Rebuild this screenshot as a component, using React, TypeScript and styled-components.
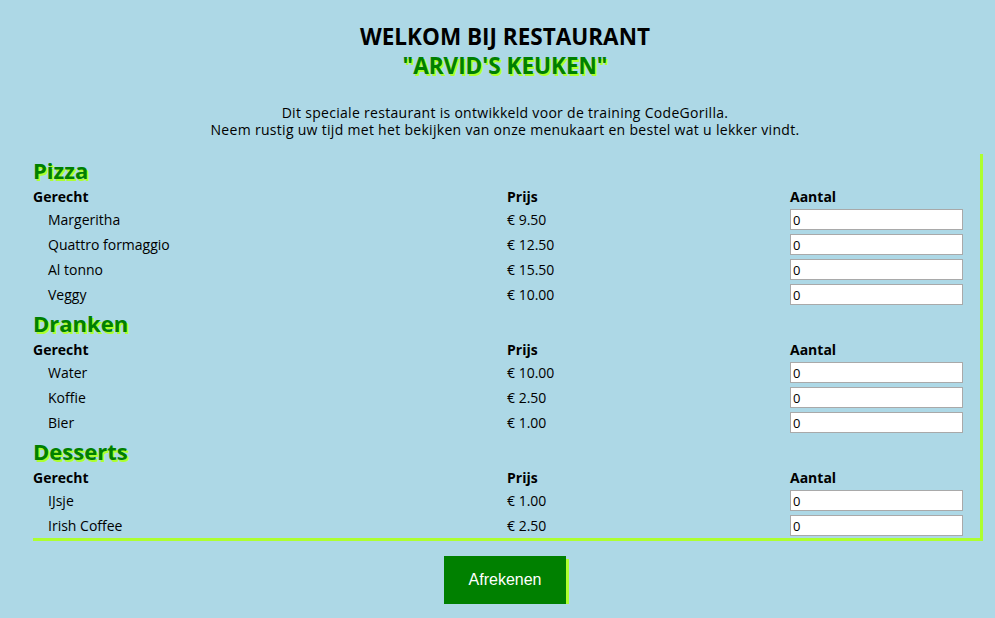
import React from 'react';
import styled, { createGlobalStyle } from 'styled-components';

const GlobalStyle = createGlobalStyle`
  body {
    margin: 8px;
    background: #add8e6;
    font-family: 'Open Sans', 'DejaVu Sans', sans-serif;
    color: #000;
  }
`;

const Page = styled.div`
  padding: 0 4px 0 25px;
`;

const Header = styled.header`
  padding-right: 6px;
  text-align: center;
`;

const Title = styled.h1`
  margin: 14px 0 0;
  font-size: 22.5px;
  line-height: 29px;
  font-weight: 700;
  text-transform: uppercase;
`;

const Brand = styled.span`
  display: block;
  color: green;
  text-shadow: 2px 2px 0 #adff2f;
`;

const Intro = styled.p`
  margin: 24px 0 16px;
  font-size: 14px;
  line-height: 17px;
  letter-spacing: 0.3px;
`;

const Menu = styled.div`
  padding-top: 3px;
  border-right: 3px solid #adff2f;
  border-bottom: 3px solid #adff2f;
`;

const Section = styled.section`
  & + & {
    margin-top: 3px;
  }
`;

const Category = styled.h2`
  margin: 0;
  padding-bottom: 3px;
  font-size: 22px;
  line-height: 26px;
  font-weight: 700;
  color: green;
  text-shadow: 2px 2px 0 #adff2f;
`;

const Row = styled.div<{ $head?: boolean }>`
  display: grid;
  grid-template-columns: 474px 283px 1fr;
  align-items: center;
  height: ${(p) => (p.$head ? '21px' : '25px')};
  font-size: 14px;
  font-weight: ${(p) => (p.$head ? 700 : 400)};
`;

const Dish = styled.span`
  padding-left: 15px;
`;

const Amount = styled.input`
  box-sizing: border-box;
  width: 173px;
  height: 21px;
  margin: 0;
  padding: 1px 2px;
  border: 1px solid #a9a9a9;
  background: #fff;
  font-family: 'Open Sans', 'DejaVu Sans', sans-serif;
  font-size: 13px;
  color: #000;
  outline: none;
`;

const Footer = styled.div`
  display: flex;
  justify-content: center;
  padding: 15px 6px 0 0;
`;

const PayButton = styled.button`
  width: 122px;
  height: 48px;
  border: none;
  background: green;
  color: #fff;
  font-family: 'Liberation Sans', Arial, sans-serif;
  font-size: 16px;
  box-shadow: 3px 3px 0 #adff2f;
  cursor: pointer;
`;

type Item = { name: string; price: string };

const menu: { title: string; items: Item[] }[] = [
  {
    title: 'Pizza',
    items: [
      { name: 'Margeritha', price: '9.50' },
      { name: 'Quattro formaggio', price: '12.50' },
      { name: 'Al tonno', price: '15.50' },
      { name: 'Veggy', price: '10.00' },
    ],
  },
  {
    title: 'Dranken',
    items: [
      { name: 'Water', price: '10.00' },
      { name: 'Koffie', price: '2.50' },
      { name: 'Bier', price: '1.00' },
    ],
  },
  {
    title: 'Desserts',
    items: [
      { name: 'IJsje', price: '1.00' },
      { name: 'Irish Coffee', price: '2.50' },
    ],
  },
];

export default function App() {
  return (
    <Page>
      <GlobalStyle />
      <Header>
        <Title>
          Welkom bij restaurant
          <Brand>"Arvid's keuken"</Brand>
        </Title>
        <Intro>
          Dit speciale restaurant is ontwikkeld voor de training CodeGorilla.
          <br />
          Neem rustig uw tijd met het bekijken van onze menukaart en bestel wat u lekker vindt.
        </Intro>
      </Header>
      <Menu>
        {menu.map((cat) => (
          <Section key={cat.title}>
            <Category>{cat.title}</Category>
            <Row $head>
              <span>Gerecht</span>
              <span>Prijs</span>
              <span>Aantal</span>
            </Row>
            {cat.items.map((item) => (
              <Row key={item.name}>
                <Dish>{item.name}</Dish>
                <span>€ {item.price}</span>
                <Amount type="text" defaultValue="0" />
              </Row>
            ))}
          </Section>
        ))}
      </Menu>
      <Footer>
        <PayButton>Afrekenen</PayButton>
      </Footer>
    </Page>
  );
}
